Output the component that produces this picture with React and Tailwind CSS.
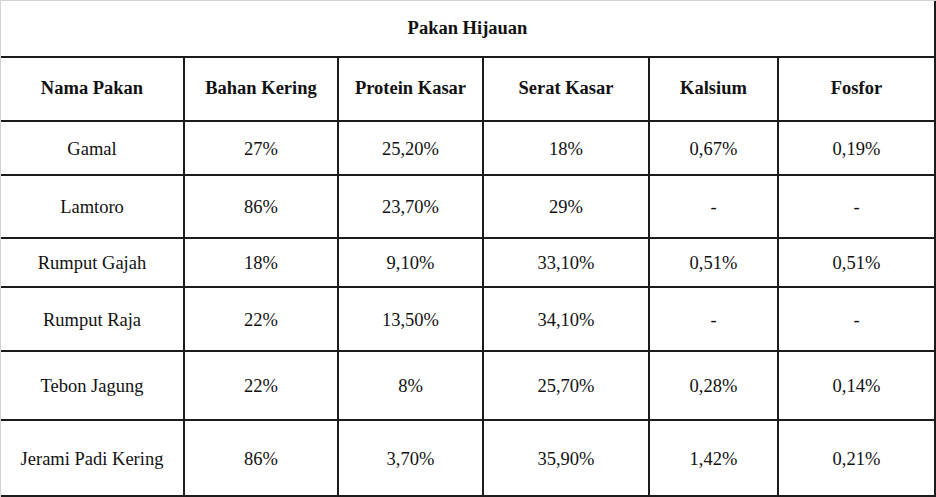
const columns = ['Nama Pakan', 'Bahan Kering', 'Protein Kasar', 'Serat Kasar', 'Kalsium', 'Fosfor'];

const rows = [
  { h: 'h-[54px]', cells: ['Gamal', '27%', '25,20%', '18%', '0,67%', '0,19%'] },
  { h: 'h-[63px]', cells: ['Lamtoro', '86%', '23,70%', '29%', '-', '-'] },
  { h: 'h-[49px]', cells: ['Rumput Gajah', '18%', '9,10%', '33,10%', '0,51%', '0,51%'] },
  { h: 'h-[64px]', cells: ['Rumput Raja', '22%', '13,50%', '34,10%', '-', '-'] },
  { h: 'h-[69px]', cells: ['Tebon Jagung', '22%', '8%', '25,70%', '0,28%', '0,14%'] },
  { h: 'h-[76px]', cells: ['Jerami Padi Kering', '86%', '3,70%', '35,90%', '1,42%', '0,21%'] }
];

const cell = 'flex items-center justify-center border-r-2 border-b-2 border-[#1c1c1c] text-center';

export default function App() {
  return (
    <div className="w-[936px] h-[497px] bg-white overflow-hidden border-l border-t border-[#d4d4d4] font-['Liberation_Serif','Times_New_Roman',serif] text-[18.5px] text-[#111]">
      <div className="grid grid-cols-[184px_154px_145px_166px_129px_157px]">
        <div className={`${cell} col-span-6 h-[57px] font-bold`}>Pakan Hijauan</div>
        {columns.map((c) => (
          <div key={c} className={`${cell} h-[64px] font-bold`}>
            {c}
          </div>
        ))}
        {rows.map((r) =>
          r.cells.map((v, i) => (
            <div key={r.cells[0] + i} className={`${cell} ${r.h} pt-[3px]`}>
              {v}
            </div>
          ))
        )}
      </div>
    </div>
  );
}
